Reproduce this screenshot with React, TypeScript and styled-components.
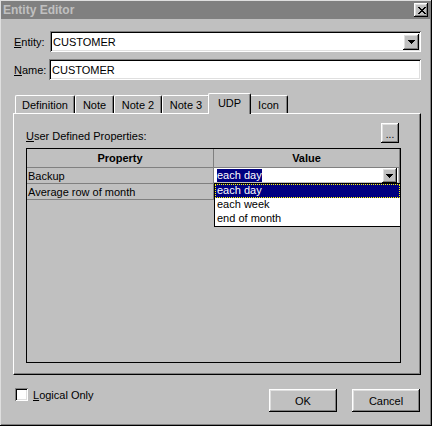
import React from "react";
import styled, { createGlobalStyle } from "styled-components";

const GlobalStyle = createGlobalStyle`
  html, body {
    margin: 0;
    padding: 0;
    background: #c0c0c0;
  }
  * {
    box-sizing: border-box;
  }
`;

const FACE = "#c0c0c0";
const SHADOW = "#808080";
const LIGHT = "#dfdfdf";

const raised = `
  box-shadow: inset -1px -1px #000, inset 1px 1px #fff,
    inset -2px -2px ${SHADOW}, inset 2px 2px ${LIGHT};
`;

const sunken = `
  box-shadow: inset 1px 1px ${SHADOW}, inset -1px -1px #fff,
    inset 2px 2px #000, inset -2px -2px ${LIGHT};
`;

const Window = styled.div`
  width: 432px;
  height: 426px;
  padding: 1px 2px 2px 1px;
  background: ${FACE};
  font-family: "Liberation Sans", Arial, sans-serif;
  font-size: 11px;
  color: #000;
  display: flex;
  flex-direction: column;
  box-shadow: inset -1px -1px #000, inset 1px 1px ${LIGHT},
    inset -2px -2px ${SHADOW};
`;

const TitleBar = styled.div`
  height: 18px;
  background: #808080;
  display: flex;
  align-items: center;
  justify-content: space-between;
  padding: 0 2px 0 2px;
`;

const TitleText = styled.span`
  color: #c0c0c0;
  font-weight: bold;
  font-size: 12px;
  letter-spacing: 0;
`;

const CloseButton = styled.div`
  width: 14px;
  height: 14px;
  background: ${FACE};
  ${raised}
  display: flex;
  align-items: center;
  justify-content: center;
  padding-left: 1px;
`;

const Content = styled.div`
  flex: 1;
  display: flex;
  flex-direction: column;
  padding: 12px 9px 0 12px;
`;

const FieldRow = styled.div<{ $labelWidth: number; $gap?: number }>`
  display: grid;
  grid-template-columns: ${(p) => p.$labelWidth}px 1fr;
  align-items: center;
  height: 21px;
  margin-top: ${(p) => p.$gap ?? 0}px;
`;

const Label = styled.label`
  padding-left: 1px;
  white-space: nowrap;
`;

const Field = styled.div`
  height: 21px;
  background: #fff;
  ${sunken}
  padding: 2px 2px 2px 3px;
  display: flex;
  align-items: center;
  justify-content: space-between;
`;

const ArrowButton = styled.div<{ $size: number }>`
  width: ${(p) => p.$size}px;
  height: ${(p) => p.$size}px;
  background: ${FACE};
  ${raised}
  display: flex;
  align-items: center;
  justify-content: center;
`;

const TabStrip = styled.div`
  display: flex;
  align-items: flex-end;
  height: 20px;
  margin-top: 13px;
  padding-left: 2px;
`;

const Tab = styled.div<{ $w: number; $active?: boolean }>`
  position: relative;
  z-index: ${(p) => (p.$active ? 2 : 1)};
  width: ${(p) => p.$w}px;
  height: ${(p) => (p.$active ? 21 : 18)}px;
  margin: ${(p) => (p.$active ? "0 -2px -1px -2px" : "0")};
  background: ${FACE};
  border-top: 1px solid #fff;
  border-left: 1px solid #fff;
  border-right: 1px solid #000;
  border-radius: 2px 2px 0 0;
  box-shadow: inset -1px 0 ${SHADOW};
  display: flex;
  align-items: center;
  justify-content: center;
  padding-bottom: ${(p) => (p.$active ? 2 : 0)}px;
`;

const Panel = styled.div`
  height: 262px;
  background: ${FACE};
  border-top: 1px solid #fff;
  border-left: 1px solid #fff;
  border-right: 1px solid #000;
  border-bottom: 1px solid #000;
  box-shadow: inset -1px -1px ${SHADOW};
  padding: 9px 19px 0 12px;
  display: flex;
  flex-direction: column;
`;

const PanelHeader = styled.div`
  display: flex;
  align-items: flex-end;
  justify-content: space-between;
  height: 20px;
`;

const PanelLabel = styled.span`
  padding-bottom: 1px;
`;

const SmallButton = styled.div`
  width: 18px;
  height: 20px;
  margin-right: 2px;
  background: ${FACE};
  ${raised}
  display: flex;
  align-items: flex-end;
  justify-content: center;
  padding-bottom: 4px;
  font-size: 10px;
  line-height: 8px;
`;

const Grid = styled.div`
  margin-top: 5px;
  height: 215px;
  border: 1px solid #000;
  background: ${FACE};
  display: flex;
  flex-direction: column;
`;

const GridRow = styled.div<{ $header?: boolean }>`
  display: grid;
  grid-template-columns: 187px 1fr;
  height: ${(p) => (p.$header ? 19 : 16)}px;
`;

const Cell = styled.div<{ $header?: boolean }>`
  position: relative;
  border-right: 1px solid ${SHADOW};
  border-bottom: 1px solid ${SHADOW};
  display: flex;
  align-items: center;
  justify-content: ${(p) => (p.$header ? "center" : "flex-start")};
  font-weight: ${(p) => (p.$header ? "bold" : "normal")};
  padding-left: ${(p) => (p.$header ? 0 : 1)}px;
  white-space: nowrap;
`;

const CellCombo = styled.div`
  position: absolute;
  inset: 0 1px 1px 0;
  background: #fff;
  display: flex;
  align-items: center;
  justify-content: space-between;
  padding: 1px 1px 0 3px;
`;

const Selected = styled.span`
  background: #000080;
  color: #fff;
  line-height: 13px;
`;

const DropList = styled.div`
  position: absolute;
  z-index: 5;
  top: 100%;
  left: 0;
  width: 187px;
  background: #fff;
  border: 1px solid #000;
  padding: 0;
`;

const ListItem = styled.div<{ $selected?: boolean }>`
  height: 14px;
  line-height: 13px;
  padding-left: 2px;
  background: ${(p) => (p.$selected ? "#000080" : "#fff")};
  color: ${(p) => (p.$selected ? "#fff" : "#000")};
  outline: ${(p) => (p.$selected ? "1px dotted #ffff00" : "none")};
  outline-offset: -1px;
`;

const BottomRow = styled.div`
  display: flex;
  align-items: flex-start;
  margin-top: 14px;
  padding-right: 1px;
`;

const CheckWrap = styled.div`
  display: flex;
  align-items: center;
  gap: 5px;
  margin-left: 2px;
  margin-top: -1px;
  flex: 1;
`;

const CheckBox = styled.div`
  width: 13px;
  height: 13px;
  background: #fff;
  ${sunken}
`;

const Buttons = styled.div`
  display: flex;
  gap: 15px;
`;

const Button = styled.div`
  width: 68px;
  height: 23px;
  background: ${FACE};
  ${raised}
  display: flex;
  align-items: center;
  justify-content: center;
`;

const CloseGlyph = () => {
  const rows: [number, number][][] = [
    [[0, 2], [6, 2]],
    [[1, 2], [5, 2]],
    [[2, 4]],
    [[3, 2]],
    [[2, 4]],
    [[1, 2], [5, 2]],
    [[0, 2], [6, 2]],
  ];
  return (
    <svg width="8" height="7" viewBox="0 0 8 7" shapeRendering="crispEdges">
      {rows.map((r, y) =>
        r.map(([x, w]) => <rect key={`${y}-${x}`} x={x} y={y} width={w} height={1} fill="#000" />)
      )}
    </svg>
  );
};

const DownArrow = () => (
  <svg width="7" height="4" viewBox="0 0 7 4" shapeRendering="crispEdges">
    <rect x="0" y="0" width="7" height="1" fill="#000" />
    <rect x="1" y="1" width="5" height="1" fill="#000" />
    <rect x="2" y="2" width="3" height="1" fill="#000" />
    <rect x="3" y="3" width="1" height="1" fill="#000" />
  </svg>
);

const tabs = [
  { label: "Definition", w: 60 },
  { label: "Note", w: 39 },
  { label: "Note 2", w: 48 },
  { label: "Note 3", w: 48 },
  { label: "UDP", w: 43, active: true },
  { label: "Icon", w: 39 },
];

const options = ["each day", "each week", "end of month"];

export default function App() {
  return (
    <>
      <GlobalStyle />
      <Window>
        <TitleBar>
          <TitleText>Entity Editor</TitleText>
          <CloseButton>
            <CloseGlyph />
          </CloseButton>
        </TitleBar>
        <Content>
          <FieldRow $labelWidth={37}>
            <Label>
              <u>E</u>ntity:
            </Label>
            <Field>
              <span>CUSTOMER</span>
              <ArrowButton $size={16}>
                <DownArrow />
              </ArrowButton>
            </Field>
          </FieldRow>
          <FieldRow $labelWidth={36} $gap={7}>
            <Label>
              <u>N</u>ame:
            </Label>
            <Field>
              <span>CUSTOMER</span>
            </Field>
          </FieldRow>

          <TabStrip>
            {tabs.map((t) => (
              <Tab key={t.label} $w={t.w} $active={t.active}>
                {t.label}
              </Tab>
            ))}
          </TabStrip>
          <Panel>
            <PanelHeader>
              <PanelLabel>
                <u>U</u>ser Defined Properties:
              </PanelLabel>
              <SmallButton>...</SmallButton>
            </PanelHeader>
            <Grid>
              <GridRow $header>
                <Cell $header>Property</Cell>
                <Cell $header>Value</Cell>
              </GridRow>
              <GridRow>
                <Cell>Backup</Cell>
                <Cell>
                  <CellCombo>
                    <Selected>each day</Selected>
                    <ArrowButton $size={15}>
                      <DownArrow />
                    </ArrowButton>
                  </CellCombo>
                  <DropList>
                    {options.map((o, i) => (
                      <ListItem key={o} $selected={i === 0}>
                        {o}
                      </ListItem>
                    ))}
                  </DropList>
                </Cell>
              </GridRow>
              <GridRow>
                <Cell>Average row of month</Cell>
                <Cell />
              </GridRow>
            </Grid>
          </Panel>

          <BottomRow>
            <CheckWrap>
              <CheckBox />
              <span>
                <u>L</u>ogical Only
              </span>
            </CheckWrap>
            <Buttons>
              <Button>OK</Button>
              <Button>Cancel</Button>
            </Buttons>
          </BottomRow>
        </Content>
      </Window>
    </>
  );
}
